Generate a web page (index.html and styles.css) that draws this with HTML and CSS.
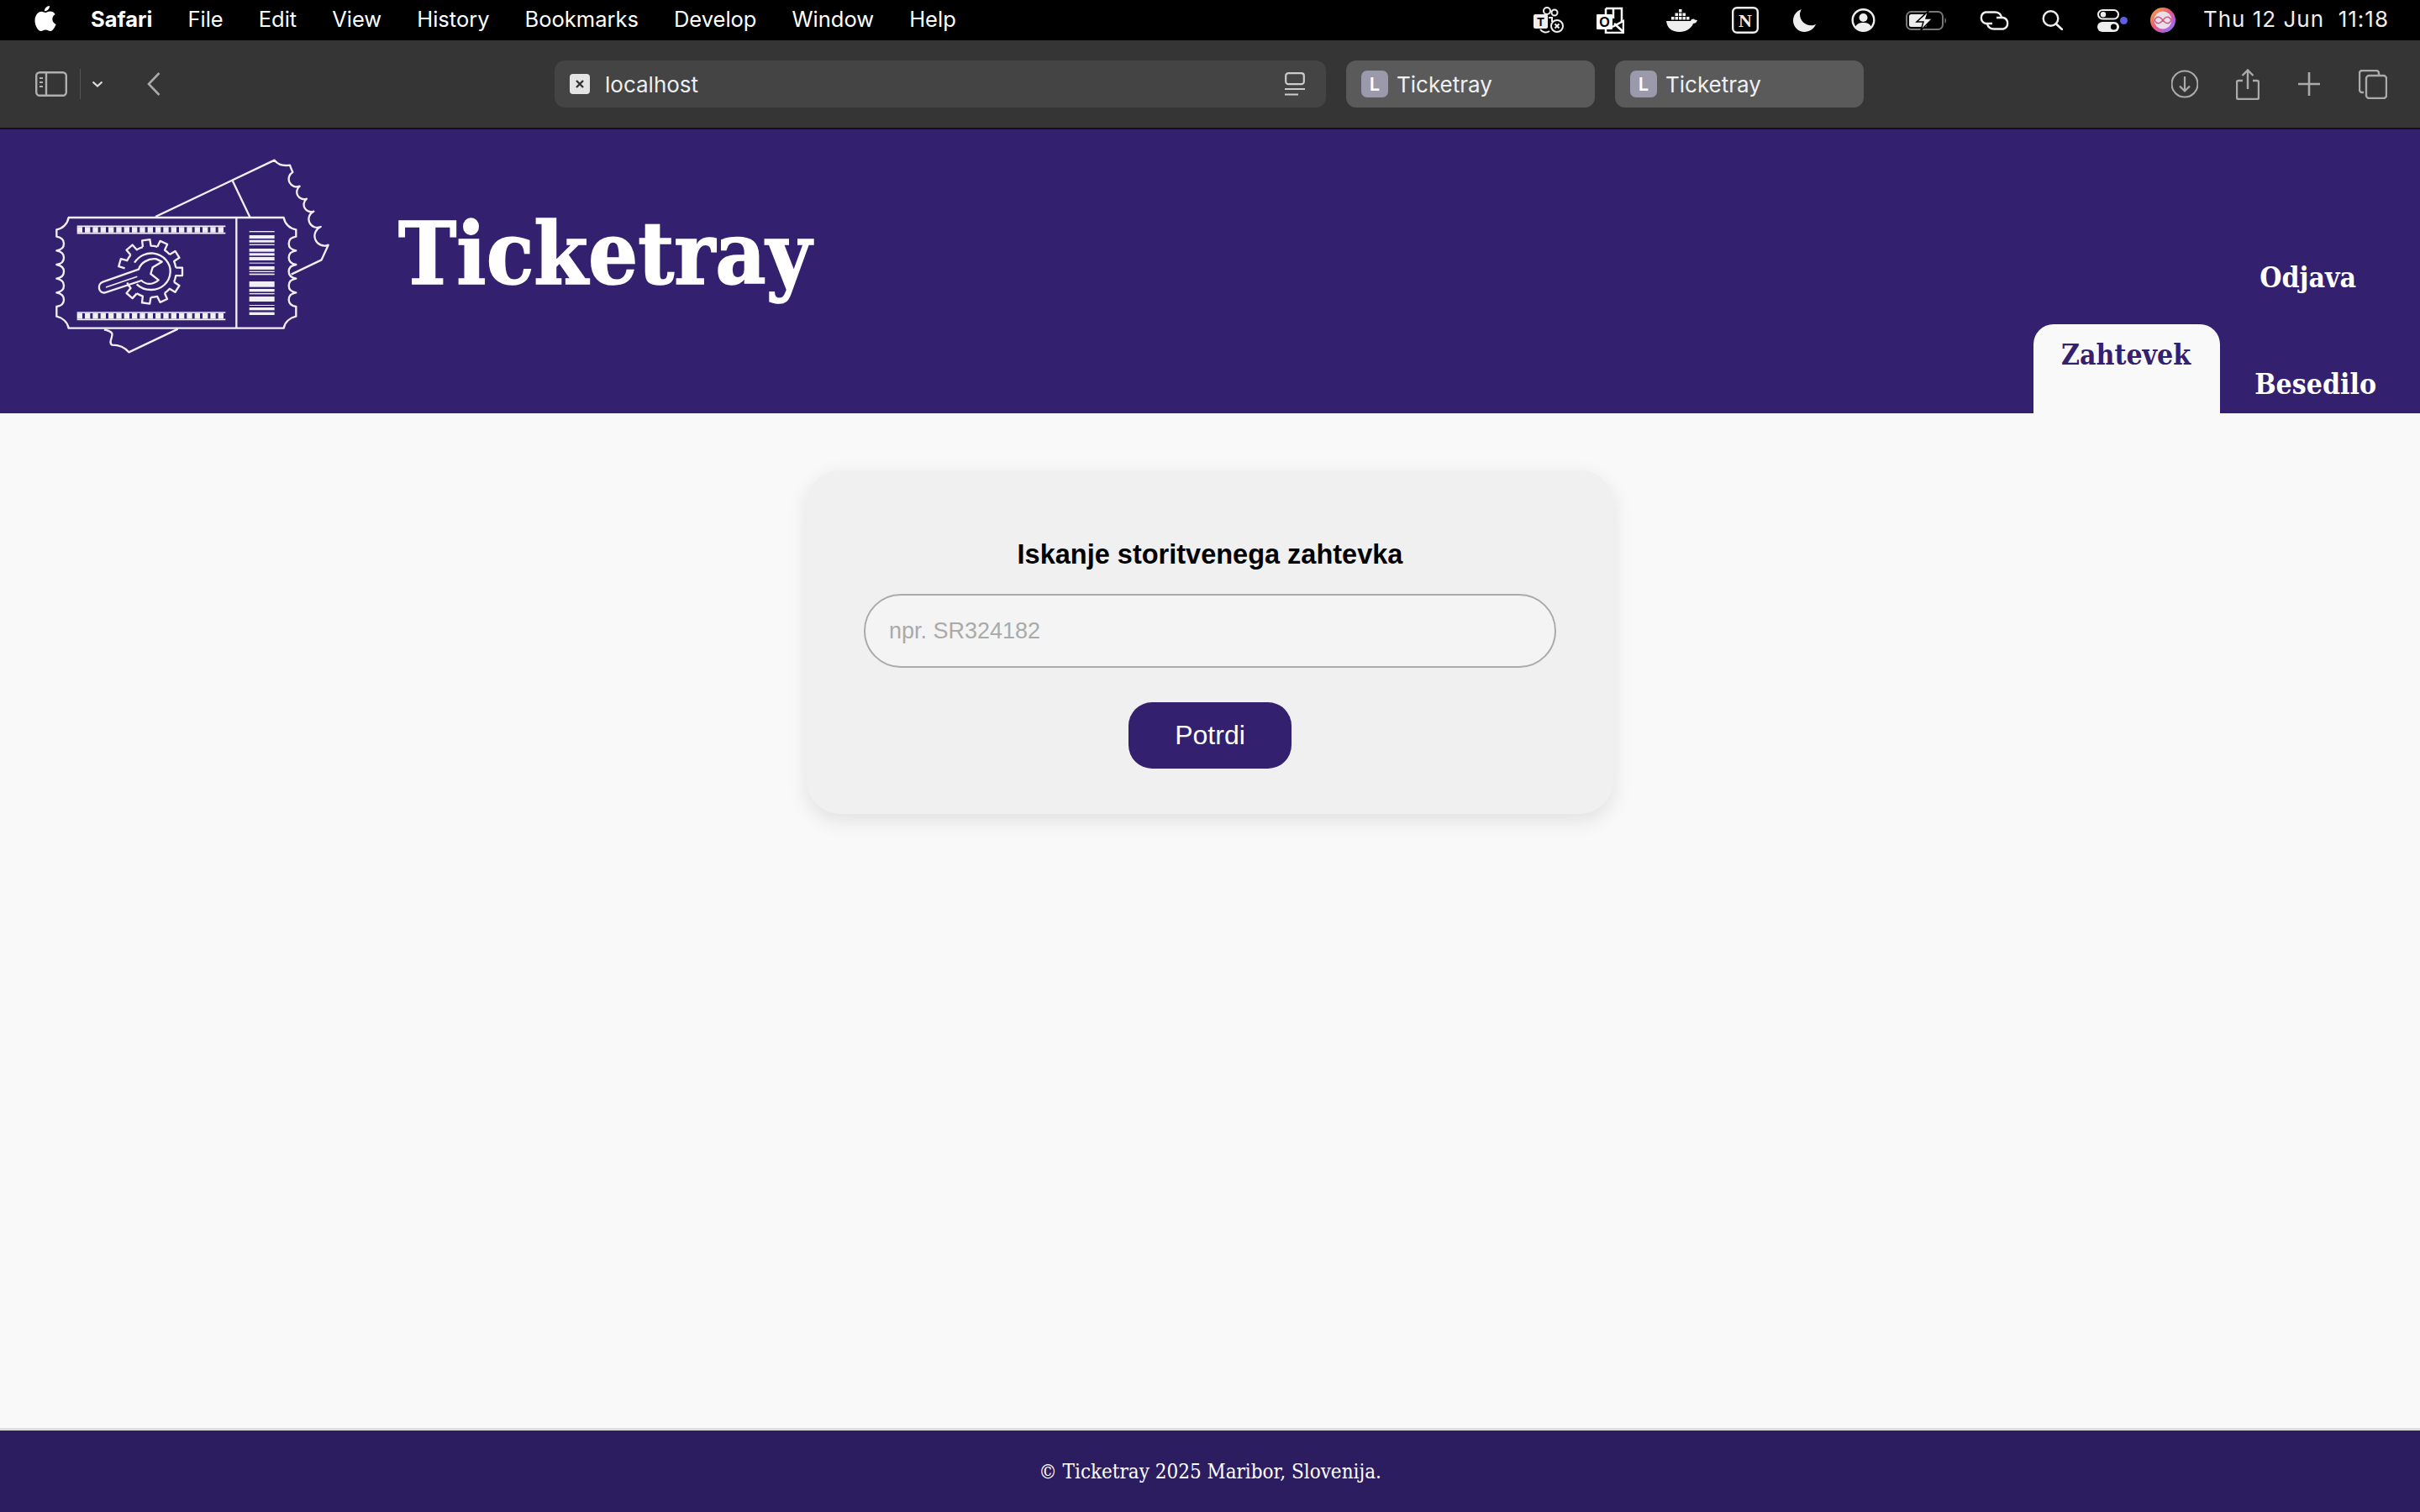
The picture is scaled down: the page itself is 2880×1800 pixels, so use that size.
FILE: index.html
```html
<!DOCTYPE html>
<html lang="sl">
<head>
<meta charset="utf-8">
<title>Ticketray</title>
<link rel="stylesheet" href="styles.css">
</head>
<body>
<div class="menubar">
  <svg class="apple" width="26" height="32" viewBox="0 0 26 32"><path fill="#fff" d="M18 1c.3 3-2.600 6.400-6 6.200C11.600 4 14.700 1.200 18 1zM13 9c1.500 0 3-1.400 5.700-1.400 2.300 0 4.600 1.200 6 3.300-5 3-4.200 9.800 1 12-1.300 3.200-4 8.100-6.800 8.100-2.200 0-3-1.400-5.600-1.400s-3.500 1.400-5.600 1.400C4.300 31 .5 24.500.5 18.500c0-6.200 3.800-10.800 8-10.800 1.900 0 3.500 1.300 4.500 1.300z"/></svg>
  <span class="menu-item menu-app">Safari</span>
  <span class="menu-item">File</span>
  <span class="menu-item">Edit</span>
  <span class="menu-item">View</span>
  <span class="menu-item">History</span>
  <span class="menu-item">Bookmarks</span>
  <span class="menu-item">Develop</span>
  <span class="menu-item">Window</span>
  <span class="menu-item">Help</span>
  <div class="status">
    <svg class="st-teams" width="36" height="32" viewBox="0 0 36 32"><rect x="0" y="9" width="17" height="17" rx="2" fill="#eee"/><text x="8.500" y="23" class="svg-t">T</text><circle cx="16" cy="5" r="4" fill="none" stroke="#eee" stroke-width="2"/><circle cx="25" cy="7" r="3.500" fill="none" stroke="#eee" stroke-width="2"/><path d="M18 13h4v5M8 27c2 3 7 5 11 2" fill="none" stroke="#eee" stroke-width="2"/><circle cx="28" cy="23" r="7" fill="none" stroke="#eee" stroke-width="2"/><path d="M25.500 20.500l5 5m0-5l-5 5" stroke="#eee" stroke-width="2"/></svg>
    <svg class="st-outlook" width="33" height="32" viewBox="0 0 33 32"><path d="M11 2h19v16" fill="none" stroke="#fff" stroke-width="2.500"/><path d="M11 2v8M20 2v12M11 26v5h21V17l-13 7" fill="none" stroke="#fff" stroke-width="2.500"/><path d="M21 20l11 10" stroke="#fff" stroke-width="2.500"/><rect x="0" y="9" width="19" height="18" rx="1" fill="#fff"/><text x="9.500" y="24" class="svg-o">O</text></svg>
    <svg class="st-docker" width="37" height="27" viewBox="0 0 37 27"><path fill="#eee" d="M0 14h29c1-3 4-3 5-1.500 1 .3 2.500.3 3 .5-1 3-3 4-5 4-2 6-9 10-16 10C6 27 1 22 0 14z"/><g fill="#eee"><rect x="6" y="9" width="3.500" height="3.500"/><rect x="10.500" y="9" width="3.500" height="3.500"/><rect x="15" y="9" width="3.500" height="3.500"/><rect x="19.500" y="9" width="3.500" height="3.500"/><rect x="24" y="9" width="3.500" height="3.500"/><rect x="10.500" y="4.500" width="3.500" height="3.500"/><rect x="15" y="4.500" width="3.500" height="3.500"/><rect x="19.500" y="4.500" width="3.500" height="3.500"/><rect x="15" y="0" width="3.500" height="3.500"/></g></svg>
    <svg class="st-notion" width="32" height="32" viewBox="0 0 32 32"><rect x="1.200" y="1.200" width="29.600" height="29.600" rx="5" fill="none" stroke="#eee" stroke-width="2.400"/><text x="16" y="24" class="svg-n">N</text></svg>
    <svg class="st-moon" width="27" height="27" viewBox="0 0 27 27"><path fill="#eee" d="M10 0C4 2 0 7.500 0 13.500 0 21 6 27 13.500 27c6 0 11-3.500 13.500-9-2 1-3.500 1.300-5.500 1.300C14 19.300 8 13.500 8 6c0-2 .8-4.300 2-6z"/></svg>
    <svg class="st-user" width="29" height="28" viewBox="0 0 29 28"><circle cx="14.500" cy="14" r="12.800" fill="none" stroke="#eee" stroke-width="2.400"/><circle cx="14.500" cy="11" r="5" fill="#eee"/><path fill="#eee" d="M5 22c2-4 5-5 9.500-5s7.500 1 9.500 5c-2.500 3-6 4.500-9.500 4.500S7.500 25 5 22z"/></svg>
    <svg class="st-battery" width="50" height="23" viewBox="0 0 50 23"><rect x="1" y="1" width="43" height="21" rx="5.500" fill="none" stroke="#777" stroke-width="2"/><rect x="4" y="4" width="21" height="15" rx="2.500" fill="#eee"/><path d="M46.500 8c2 1 2 6 0 7z" fill="#777"/><path d="M27 0L13 13h8l-3 10 14-14h-8z" fill="#eee" stroke="#000" stroke-width="1.500"/></svg>
    <svg class="st-link" width="43" height="23" viewBox="0 0 43 23"><g fill="none" stroke="#eee" stroke-width="2.400"><path d="M19 15h-8a7 7 0 0 1 0-13.500h11c4 0 7 2 8 6"/><path d="M24 8h8a7 7 0 0 1 0 13.500H21c-4 0-7-2-8-6"/></g></svg>
    <svg class="st-search" width="25" height="24" viewBox="0 0 25 24"><circle cx="10.500" cy="10" r="8.800" fill="none" stroke="#eee" stroke-width="2.400"/><path d="M17 16.500l7 6.500" stroke="#eee" stroke-width="2.600" stroke-linecap="round"/></svg>
    <svg class="st-cc" width="36" height="27" viewBox="0 0 36 27"><rect x="1" y="1" width="24" height="10.500" rx="5.200" fill="none" stroke="#eee" stroke-width="2"/><circle cx="7" cy="6.200" r="3.200" fill="#eee"/><rect x="0" y="15" width="26" height="12" rx="6" fill="#eee"/><circle cx="19.500" cy="21" r="3.600" fill="#000"/><circle cx="31.500" cy="13.500" r="4.500" fill="#5b5fe0"/></svg>
    <svg class="st-siri" width="30" height="30" viewBox="0 0 30 30"><defs><linearGradient id="siri" x1="0" y1="0" x2="1" y2="1"><stop offset="0" stop-color="#f5b13c"/><stop offset=".45" stop-color="#ec5a78"/><stop offset=".75" stop-color="#b65ee0"/><stop offset="1" stop-color="#48a6ee"/></linearGradient></defs><circle cx="15" cy="15" r="15" fill="url(#siri)"/><circle cx="15" cy="15" r="10.500" fill="#e9dfe6"/><path d="M5 15c3-6 7-4 10 0s7 6 10 0c-3-6-7-4-10 0s-7 6-10 0z" fill="none" stroke="#c85d8a" stroke-width="1.500"/></svg>
    <span class="clock">Thu 12 Jun&nbsp; 11:18</span>
  </div>
</div>

<div class="toolbar">
  <svg class="tb-sidebar" width="38" height="30" viewBox="0 0 38 30"><rect x="1.200" y="1.200" width="35.600" height="27.600" rx="4" fill="none" stroke="#b0b0b0" stroke-width="2.400"/><path d="M13 1v28" stroke="#b0b0b0" stroke-width="2.400"/><path d="M5 8h4M5 13h4M5 18h4" stroke="#b0b0b0" stroke-width="2"/></svg>
  <span class="tb-divider"></span>
  <svg class="tb-chevron" width="14" height="8" viewBox="0 0 14 8"><path d="M1.500 1.500L7 6.500l5.500-5" fill="none" stroke="#ddd" stroke-width="2.200"/></svg>
  <svg class="tb-back" width="16" height="28" viewBox="0 0 16 28"><path d="M14.500 1L2 14l12.500 13" fill="none" stroke="#aaa" stroke-width="2.600"/></svg>
  <div class="address">
    <span class="fav-x"><svg width="10" height="10" viewBox="0 0 10 10"><path d="M1 1l8 8m0-8l-8 8" stroke="#333" stroke-width="2.400"/></svg></span>
    <span class="address-text">localhost</span>
    <svg class="reader" width="24" height="28" viewBox="0 0 24 28"><rect x="1.200" y="1.200" width="21.600" height="13" rx="3" fill="none" stroke="#ccc" stroke-width="2.200"/><path d="M0 20h24M0 26.500h16" stroke="#ccc" stroke-width="2"/></svg>
  </div>
  <div class="tab"><span class="fav-l">L</span><span class="tab-text">Ticketray</span></div>
  <div class="tab"><span class="fav-l">L</span><span class="tab-text">Ticketray</span></div>
  <svg class="tb-download" width="32" height="34" viewBox="0 0 32 34"><circle cx="16" cy="17" r="15.500" fill="none" stroke="#aaa" stroke-width="2.200"/><path d="M16 8v17M10 19.500l6 6 6-6" fill="none" stroke="#aaa" stroke-width="2.200"/></svg>
  <svg class="tb-share" width="28" height="37" viewBox="0 0 28 37"><path d="M8 14H3a2 2 0 0 0-2 2v18a2 2 0 0 0 2 2h22a2 2 0 0 0 2-2V16a2 2 0 0 0-2-2h-5" fill="none" stroke="#aaa" stroke-width="2.400"/><path d="M14 24V2M7.500 8L14 1.500 20.500 8" fill="none" stroke="#aaa" stroke-width="2.400"/></svg>
  <svg class="tb-plus" width="26" height="28" viewBox="0 0 26 28"><path d="M13 0v28M0 14h26" stroke="#aaa" stroke-width="2.600"/></svg>
  <svg class="tb-tabs" width="34" height="35" viewBox="0 0 34 35"><path d="M6 27H4a3 3 0 0 1-3-3V4a3 3 0 0 1 3-3h17a3 3 0 0 1 3 3v2" fill="none" stroke="#aaa" stroke-width="2.400"/><rect x="9" y="7" width="24" height="27" rx="3.500" fill="none" stroke="#aaa" stroke-width="2.400"/></svg>
</div>

<header class="site-header">
  <svg class="logo" width="380" height="260" viewBox="0 0 1140 780">
    <g fill="none" stroke="#f1eff6" stroke-width="7" stroke-linejoin="round">
      <path d="M435 264L860 62C870 75 885 84 915 80C918 90 922 97 925 105A28 28 0 0 0 950 155A26 26 0 0 0 975 200A26 26 0 0 0 1000 245A30 30 0 0 0 1025 300A35 35 0 0 0 1052 365L1028 418L920 470"/>
      <path d="M710 135L772 265"/>
      <path d="M515 665L340 748C325 730 305 722 280 722C265 712 285 695 280 680C272 670 262 670 252 667"/>
      <path d="M125 267H893C897 290 915 307 937 310V335c-20 3-26 13-26 25s8 22 26 25c-20 3-26 13-26 25s8 22 26 25c-20 3-26 13-26 25s8 22 26 25c-20 3-26 13-26 25s8 22 26 25c-20 3-26 13-26 25s8 22 26 25V620C915 625 897 640 893 662H125C121 640 103 625 82 620V585c20-3 26-13 26-25s-8-22-26-25c20-3 26-13 26-25s-8-22-26-25c20-3 26-13 26-25s-8-22-26-25c20-3 26-13 26-25s-8-22-26-25c20-3 26-13 26-25s-8-22-26-25V310C103 307 121 290 125 267Z"/>
      <path d="M724 267V662"/>
      <path d="M155 298H685M155 323H685M155 606H685M155 631H685" stroke-width="5"/>
      <path d="M155 310.500H685M155 618.500H685" stroke-width="20" stroke-dasharray="19 9"/>
      <g transform="translate(417 460)">
        <path id="gear-tooth" d="M-14.400-90.900L-14-114H14L14.400-90.900A92 92 0 0 1 37-84.200" transform="rotate(-8)"/>
        <use href="#gear-tooth" transform="rotate(32.700)"/>
        <use href="#gear-tooth" transform="rotate(65.400)"/>
        <use href="#gear-tooth" transform="rotate(98.100)"/>
        <use href="#gear-tooth" transform="rotate(130.800)"/>
        <use href="#gear-tooth" transform="rotate(163.500)"/>
        <use href="#gear-tooth" transform="rotate(196.200)"/>
        <use href="#gear-tooth" transform="rotate(228.900)"/>
        <use href="#gear-tooth" transform="rotate(294.300)"/>
        <use href="#gear-tooth" transform="rotate(327)"/>
      </g>
      <path d="M360 428C378 402 405 392 428 395C465 400 490 430 488 462C486 500 455 525 420 525C398 525 380 517 368 505"/>
      <path d="M247 497L375 452C382 428 410 412 438 415L458 425L425 445L418 468L446 490C428 505 405 510 385 492L255 535C232 540 225 505 247 497Z"/>
      <path d="M258 516L370 478" stroke-width="5"/>
    </g>
    <g fill="#f1eff6">
      <rect x="770" y="315" width="90" height="4"/><rect x="770" y="330" width="90" height="12"/><rect x="770" y="347" width="90" height="9"/><rect x="770" y="362" width="90" height="4"/><rect x="770" y="378" width="90" height="11"/><rect x="770" y="394" width="90" height="9"/><rect x="770" y="408" width="90" height="12"/><rect x="770" y="428" width="90" height="3"/><rect x="770" y="441" width="90" height="12"/><rect x="770" y="458" width="90" height="4"/><rect x="770" y="467" width="90" height="5"/><rect x="770" y="495" width="90" height="20"/><rect x="770" y="522" width="90" height="10"/><rect x="770" y="537" width="90" height="4"/><rect x="770" y="549" width="90" height="18"/><rect x="770" y="579" width="90" height="3"/><rect x="770" y="588" width="90" height="10"/><rect x="770" y="605" width="90" height="10"/>
    </g>
  </svg>
  <h1 class="brand">Ticketray</h1>
  <nav class="site-nav">
    <a class="nav-logout">Odjava</a>
    <div class="nav-tabs">
      <a class="nav-tab nav-tab-active">Zahtevek</a>
      <a class="nav-tab">Besedilo</a>
    </div>
  </nav>
</header>

<main class="content">
  <section class="card">
    <h2 class="card-title">Iskanje storitvenega zahtevka</h2>
    <input class="search-input" type="text" placeholder="npr. SR324182">
    <button class="submit" type="button">Potrdi</button>
  </section>
</main>

<footer class="site-footer">© Ticketray 2025 Maribor, Slovenija.</footer>
</body>
</html>
```
FILE: styles.css
```css
* { box-sizing: border-box; }
html, body { margin: 0; height: 100%; }
body {
  width: 2880px;
  height: 1800px;
  display: flex;
  flex-direction: column;
  background: #f9f9f9;
  font-family: "Liberation Sans", sans-serif;
  overflow: hidden;
}
svg { display: block; flex: none; }

/* macOS menu bar */
.menubar {
  height: 48px;
  flex: none;
  background: #000;
  color: #fff;
  display: flex;
  align-items: center;
  padding-left: 41px;
  font-family: Inter, sans-serif;
  font-size: 25.5px;
}
.apple { margin-right: 41px; margin-top: -4px; }
.menu-item { margin-right: 42px; margin-bottom: 3px; }
.menu-app { font-weight: 700; }
.status { margin-left: auto; display: flex; align-items: center; padding-right: 37px; }
.clock { margin-left: 33px; margin-bottom: 3px; color: #eee; white-space: nowrap; font-size: 26px; letter-spacing: 1px; }
.svg-t { font: 700 14px "Liberation Sans", sans-serif; fill: #000; text-anchor: middle; }
.svg-o { font: 700 16px "Liberation Sans", sans-serif; fill: #000; text-anchor: middle; }
.svg-n { font: 700 22px "Liberation Serif", serif; fill: #eee; text-anchor: middle; }
.st-outlook { margin-left: 39px; }
.st-docker { margin-left: 50px; }
.st-notion { margin-left: 41px; }
.st-moon { margin-left: 41px; }
.st-user { margin-left: 42px; }
.st-battery { margin-left: 36px; }
.st-link { margin-left: 34px; }
.st-search { margin-left: 35px; }
.st-cc { margin-left: 41px; }
.st-siri { margin-left: 27px; }

/* Safari toolbar */
.toolbar {
  height: 106px;
  flex: none;
  background: #353535;
  border-bottom: 2px solid #111;
  display: flex;
  align-items: center;
  padding-left: 42px;
}
.tb-divider { width: 1px; height: 36px; background: #555; margin-left: 15px; }
.tb-chevron { margin-left: 13px; }
.tb-back { margin-left: 52px; }
.address {
  width: 918px;
  height: 56px;
  margin-left: 469px;
  background: #444;
  border-radius: 12px;
  display: flex;
  align-items: center;
  padding: 0 25px 0 18px;
  color: #eee;
  font-family: Inter, sans-serif;
  font-size: 26px;
}
.fav-x {
  width: 24px;
  height: 24px;
  border-radius: 4px;
  background: #e4e4e4;
  display: flex;
  align-items: center;
  justify-content: center;
}
.address-text { margin-left: 18px; }
.reader { margin-left: auto; }
.tab {
  width: 296px;
  height: 56px;
  margin-left: 24px;
  background: #5a5a5a;
  border-radius: 12px;
  display: flex;
  align-items: center;
  padding-left: 18px;
  color: #f0f0f0;
  font-family: Inter, sans-serif;
  font-size: 26px;
}
.fav-l {
  width: 32px;
  height: 32px;
  border-radius: 7px;
  background: #9a9aab;
  color: #fff;
  font-size: 22px;
  font-weight: 600;
  display: flex;
  align-items: center;
  justify-content: center;
}
.tab-text { margin-left: 10px; }
.tb-download { margin-left: 366px; }
.tb-share { margin-left: 45px; }
.tb-plus { margin-left: 46px; }
.tb-tabs { margin-left: 46px; }

/* Site header */
.site-header {
  height: 338px;
  flex: none;
  background: #33206e;
  display: flex;
  align-items: flex-start;
  padding-left: 40px;
  font-family: "DejaVu Serif", serif;
  font-stretch: condensed;
}
.logo { margin-top: 16px; }
.brand {
  margin: 96px 0 0 54px;
  color: #fff;
  font-size: 103.5px;
  font-weight: 700;
  line-height: 1;
  -webkit-text-stroke: 1.5px #fff;
}
.site-nav {
  margin-left: auto;
  align-self: stretch;
  display: flex;
  flex-direction: column;
  align-items: flex-end;
  justify-content: flex-end;
  font-size: 33.5px;
  font-weight: 700;
}
.nav-logout { color: #fff; margin-right: 76px; margin-bottom: 34px; line-height: 42px; }
.nav-tabs { display: flex; align-items: flex-end; padding-right: 20px; }
.nav-tab {
  height: 106px;
  color: #fff;
  padding: 51px 32px 0 31px;
  margin-left: 10px;
  line-height: 42px;
  border-radius: 24px 24px 0 0;
}
.nav-tab-active { background: #f9f9f9; color: #33206e; padding: 16px 35px 0 33px; }

/* Main */
.content { flex: 1; display: flex; justify-content: center; align-items: flex-start; padding-top: 68px; }
.card {
  width: 960px;
  height: 409px;
  background: #f0f0f0;
  border-radius: 40px;
  box-shadow: 0 8px 24px rgba(0, 0, 0, .1);
  padding: 80px 68px 0;
  display: flex;
  flex-direction: column;
  align-items: center;
}
.card-title { margin: 0; font-size: 32.5px; line-height: 40px; font-weight: 700; color: #000; }
.search-input {
  width: 824px;
  height: 88px;
  margin-top: 27px;
  padding: 0 28px;
  background: #f4f4f4;
  border: 2px solid #aaa;
  border-radius: 44px;
  font-family: "Liberation Sans", sans-serif;
  font-size: 27px;
  outline: none;
}
.search-input::placeholder { color: #aaa; opacity: 1; }
.submit {
  width: 194px;
  height: 79px;
  margin-top: 41px;
  border: 0;
  border-radius: 28px;
  background: #33206e;
  color: #fff;
  font-family: "Liberation Sans", sans-serif;
  font-size: 32px;
}

/* Footer */
.site-footer {
  height: 100px;
  flex: none;
  background: #2b1d5f;
  border-top: 3px solid #ddd;
  color: #fff;
  display: flex;
  align-items: center;
  justify-content: center;
  font-family: "DejaVu Serif", serif;
  font-stretch: condensed;
  font-size: 24px;
}
```
